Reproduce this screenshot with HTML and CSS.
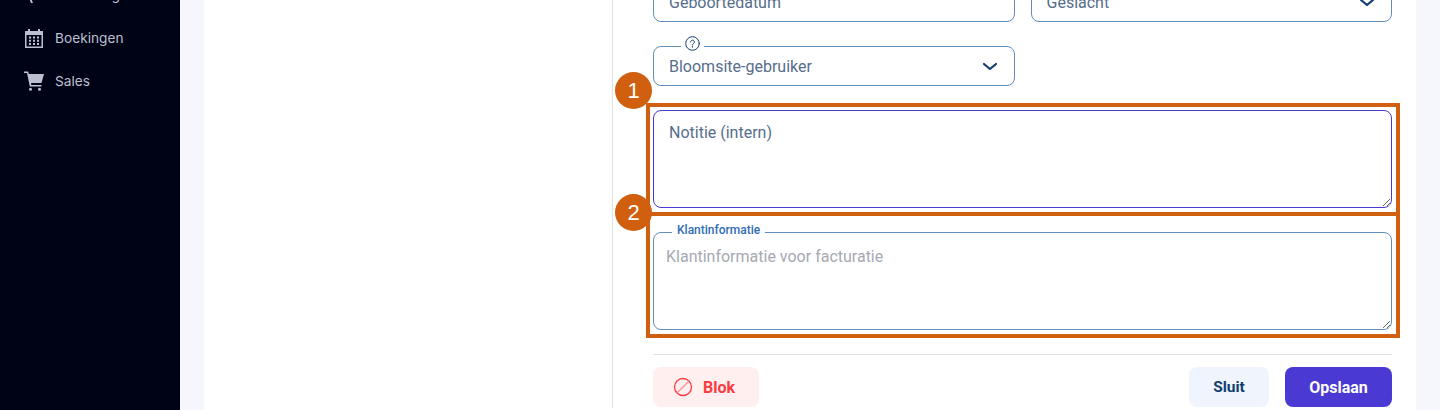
FILE: index.html
```html
<!DOCTYPE html>
<html lang="nl">
<head>
<meta charset="utf-8">
<title>Klant</title>
<link rel="stylesheet" href="styles.css">
</head>
<body>
<div class="app">
  <nav class="sidebar">
    <a class="nav-item"><svg class="nav-icon" viewBox="0 0 20 20"><path fill="currentColor" d="M2 10l12-5v10zM5 13l2 5h2l-2-5z"/></svg><span>Marketing</span></a>
    <a class="nav-item"><svg class="nav-icon" viewBox="0 0 20 20"><path fill="currentColor" fill-rule="evenodd" d="M4 1h2v2h8V1h2v2h3v17H1V3h3zM2.500 7v11.500h15V7zM5 8.500h2v2H5zM9 8.500h2v2H9zM13 8.500h2v2h-2zM5 11.800h2v2H5zM9 11.800h2v2H9zM13 11.800h2v2h-2zM5 15h2v2H5zM9 15h2v2H9zM13 15h2v2h-2z"/></svg><span>Boekingen</span></a>
    <a class="nav-item"><svg class="nav-icon" viewBox="0 0 20 20"><path fill="currentColor" d="M0 .5h4.200l.6 2.500H20l-2.500 9H7l.4 2h10.100v1.500H5.800L3 2H0z"/><circle cx="6.500" cy="18.300" r="1.500" fill="currentColor"/><circle cx="15.500" cy="18.300" r="1.500" fill="currentColor"/></svg><span>Sales</span></a>
  </nav>
  <main class="content">
    <section class="card">
      <div class="card-left"></div>
      <form class="form">
        <div class="row">
          <div class="field"><span class="value">Geboortedatum</span></div>
          <div class="field"><span class="value">Geslacht</span><svg class="chevron" viewBox="0 0 16 10"><path d="M2 2l6 5 6-5"/></svg></div>
        </div>
        <div class="row">
          <div class="field">
            <span class="legend legend-icon"><svg class="help" viewBox="0 0 15 15"><circle cx="7.500" cy="7.500" r="6.800"/><path d="M5.600 6a1.900 1.900 0 1 1 2.900 1.600c-.7.400-1 .7-1 1.400"/><path d="M7.500 10.600v.6"/></svg></span>
            <span class="value">Bloomsite-gebruiker</span><svg class="chevron" viewBox="0 0 16 10"><path d="M2 2l6 5 6-5"/></svg>
          </div>
        </div>
        <textarea class="area area-note" placeholder="Notitie (intern)"></textarea>
        <div class="area-wrap">
          <span class="legend legend-text">Klantinformatie</span>
          <textarea class="area area-info" placeholder="Klantinformatie voor facturatie"></textarea>
        </div>
        <hr class="divider">
        <div class="actions">
          <button type="button" class="btn btn-block"><svg class="block-icon" viewBox="0 0 20 20"><circle cx="10" cy="10" r="8.500"/><path class="slash" d="M4 16L16 4"/></svg>Blok</button>
          <span class="spacer"></span>
          <button type="button" class="btn btn-close">Sluit</button>
          <button type="button" class="btn btn-save">Opslaan</button>
        </div>
        <div class="frame frame-one"></div>
        <div class="frame frame-two"></div>
        <span class="badge badge-one">1</span>
        <span class="badge badge-two">2</span>
      </form>
    </section>
  </main>
</div>
</body>
</html>
```
FILE: styles.css
```css
* { box-sizing: border-box; }
html, body { margin: 0; height: 410px; overflow: hidden; }
body { font-family: "Roboto", "Liberation Sans", sans-serif; background: #f6f7fc; }

.app { display: flex; height: 410px; overflow: hidden; }

.sidebar {
  width: 180px;
  flex: none;
  background: #000316;
  margin-top: -27px;
  padding-left: 24px;
  display: flex;
  flex-direction: column;
  height: 437px;
  font-family: "Inter", "Liberation Sans", sans-serif;
}
.nav-item {
  height: 43px;
  display: flex;
  align-items: center;
  gap: 11px;
  font-size: 13.700px;
  color: #bcbfd0;
}
.nav-icon { width: 20px; height: 20px; flex: none; }

.content { flex: 1; padding: 0 24px; min-width: 0; }
.card { background: #fff; height: 440px; margin-top: -30px; display: flex; }
.card-left { width: 409px; flex: none; border-right: 1px solid #e2e2e4; height: 438px; }

.form {
  position: relative;
  flex: 1;
  padding: 12px 24px 0 40px;
  display: flex;
  flex-direction: column;
  gap: 24px;
  min-width: 0;
}
.row { display: grid; grid-template-columns: repeat(2, 1fr); gap: 16px; }
.field {
  position: relative;
  height: 40px;
  border: 1px solid #5f8ebf;
  border-radius: 8px;
  display: flex;
  align-items: center;
  justify-content: space-between;
  padding: 1px 16px 0 15px;
  background: #fff;
}
.value { font-size: 16px; color: #566d8c; }
.chevron { width: 16px; height: 10px; fill: none; stroke: #123d70; stroke-width: 2.200; stroke-linecap: round; stroke-linejoin: round; }

.legend {
  position: absolute;
  background: #fff;
  display: flex;
  align-items: center;
  z-index: 1;
}
.legend-icon { left: 27px; top: -11px; padding: 0 4px; height: 15px; }
.help { width: 15px; height: 15px; fill: none; stroke: #123d70; stroke-width: 1; stroke-linecap: round; }

.area-wrap { position: relative; height: 98px; }
.legend-text {
  left: 19px;
  top: -9px;
  padding: 0 5px;
  height: 14px;
  font-size: 12px;
  font-weight: 500;
  color: #2f6db5;
}
.area {
  display: block;
  width: 100%;
  height: 98px;
  margin: 0;
  background: #fff;
  border-radius: 8px;
  outline: none;
  font-family: inherit;
  font-size: 16px;
  resize: vertical;
}
.area-note { border: 1px solid #4a3bd0; padding: 12px 15px; }
.area-note::placeholder { color: #566d8c; opacity: 1; }
.area-info { border: 1px solid #5f8ebf; padding: 14px 12px; }
.area-info::placeholder { color: #a6a9b2; opacity: 1; }

.divider { border: 0; border-top: 1px solid #e2e2e4; margin: 0; width: 100%; }
.actions { display: flex; gap: 16px; margin-top: -12px; }
.spacer { flex: 1; }
.btn {
  height: 40px;
  border: 0;
  border-radius: 8px;
  font-family: inherit;
  font-size: 16px;
  font-weight: 700;
  display: flex;
  align-items: center;
  justify-content: center;
}
.btn-block { width: 106px; gap: 10px; justify-content: flex-start; padding: 0 0 0 20px; background: #ffefef; color: #fb3a42; }
.block-icon { width: 20px; height: 20px; fill: none; stroke: #fb3a42; stroke-width: 1.300; }
.block-icon .slash { stroke: #fb8f93; }
.btn-close { width: 80px; background: #f0f5fd; color: #123d70; font-size: 15.500px; }
.btn-save { width: 107px; background: #4b39d4; color: #fff; }

.frame {
  position: absolute;
  left: 33px;
  width: 754px;
  border: 4px solid #d05f0f;
}
.frame-one { top: 133px; height: 113px; }
.frame-two { top: 242px; height: 126px; }

.badge {
  position: absolute;
  left: 2px;
  width: 37px;
  height: 37px;
  border-radius: 50%;
  background: #d05f0f;
  color: #fff;
  font-family: "Liberation Sans", sans-serif;
  font-size: 22px;
  display: flex;
  align-items: center;
  justify-content: center;
}
.badge-one { top: 102px; }
.badge-two { top: 224px; }
```
